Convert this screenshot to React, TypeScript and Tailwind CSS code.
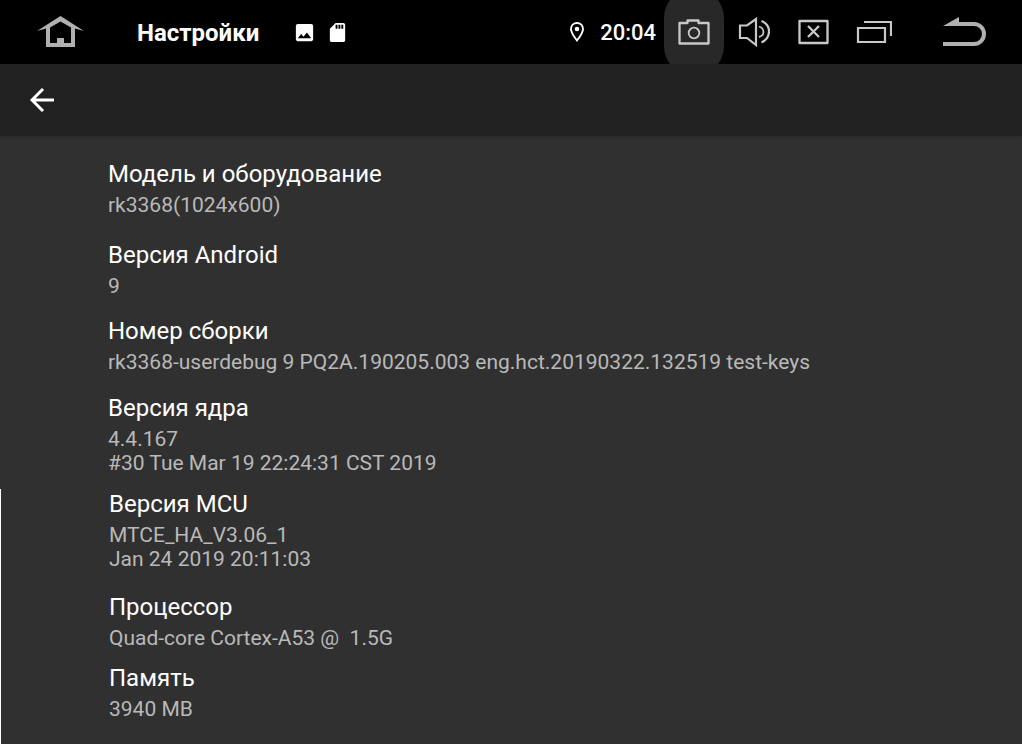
import { MdImage, MdSdCard } from "react-icons/md";
import { clsx } from "clsx";

type Info = { title: string; lines: string[]; gap: string };

const SYSTEM_INFO: Info[] = [
  { title: "Модель и оборудование", lines: ["rk3368(1024x600)"], gap: "pb-[23px]" },
  { title: "Версия Android", lines: ["9"], gap: "pb-[18px]" },
  {
    title: "Номер сборки",
    lines: ["rk3368-userdebug 9 PQ2A.190205.003 eng.hct.20190322.132519 test-keys"],
    gap: "pb-[19px]",
  },
  {
    title: "Версия ядра",
    lines: ["4.4.167", "#30 Tue Mar 19 22:24:31 CST 2019"],
    gap: "pb-[14px]",
  },
];

const HARDWARE_INFO: Info[] = [
  { title: "Версия MCU", lines: ["MTCE_HA_V3.06_1", "Jan 24 2019 20:11:03"], gap: "pb-[21px]" },
  { title: "Процессор", lines: ["Quad-core Cortex-A53 @  1.5G"], gap: "pb-[13px]" },
  { title: "Память", lines: ["3940 MB"], gap: "pb-[21px]" },
];

function HomeIcon() {
  return (
    <svg width="48" height="32" viewBox="0 0 48 32" fill="#b0b0b0">
      <path
        fillRule="evenodd"
        d="M24.500 0 48 15 39 12.500V31H10V12.500L1 15ZM24.500 5.500 14 11.500V27H21V22H28V27H35V11.500Z"
      />
    </svg>
  );
}

function CameraIcon() {
  return (
    <svg width="32" height="26" viewBox="0 0 32 26" fill="none" stroke="#c8c8c8" strokeWidth="2.300">
      <path d="M1.500 4H9.500V1.500H20.500V4H30.500V24.500H1.500Z" strokeLinejoin="round" />
      <circle cx="16" cy="14" r="5.300" strokeWidth="1.800" />
    </svg>
  );
}

function VolumeIcon() {
  return (
    <svg width="32" height="30" viewBox="0 0 32 30" fill="none" stroke="#c8c8c8" strokeWidth="2.200">
      <path d="M2 8.500H9L18 2V28L9 21H2Z" />
      <path d="M21 9.500Q25.500 11 25.500 15T21 20" strokeWidth="1.800" />
      <path d="M23.500 4C28.500 6 31 10 31 14.500S28.500 23 23.500 25.500" />
    </svg>
  );
}

function CloseBoxIcon() {
  return (
    <svg width="32" height="26" viewBox="0 0 32 26" fill="none" stroke="#c8c8c8" strokeWidth="2.300">
      <path d="M1.500 2H29.500V24H1.500Z" strokeLinejoin="round" />
      <path d="M10 7 21 18M21 7 10 18" />
    </svg>
  );
}

function RecentsIcon() {
  return (
    <svg width="36" height="24" viewBox="0 0 36 24" fill="none" stroke="#c8c8c8" strokeWidth="2.200">
      <path d="M2 8H29V22H2Z" />
      <path d="M8 2H35V16" />
    </svg>
  );
}

function ReturnIcon() {
  return (
    <svg width="44" height="30" viewBox="0 0 44 30">
      <path d="M1 9 17 0V5H32A12 12 0 0 1 32 29H1V25H32A8 8 0 0 0 32 9Z" fill="#b0b0b0" />
    </svg>
  );
}

function PinIcon() {
  return (
    <svg width="14" height="20" viewBox="0 0 14 20">
      <path
        d="M7 1C3.600 1 1 3.500 1 7 1 11 7 18.500 7 18.500S13 11 13 7C13 3.500 10.400 1 7 1Z"
        fill="none"
        stroke="#fff"
        strokeWidth="1.900"
      />
      <circle cx="7" cy="7" r="2.300" fill="#fff" />
    </svg>
  );
}

function StatusBar() {
  const button = "flex h-16 w-15 items-center justify-center";

  return (
    <header className="flex h-16 items-center overflow-hidden bg-black text-white">
      <button type="button" aria-label="Домой" className="ml-9 shrink-0">
        <HomeIcon />
      </button>
      <h1 className="ml-[53px] pt-px text-2xl font-bold">Настройки</h1>
      <div className="ml-[34px] flex items-center gap-[10px]">
        <MdImage className="size-[23px]" />
        <MdSdCard className="size-[23px]" />
      </div>

      <div className="ml-auto flex shrink-0 items-center">
        <PinIcon />
        <time className="mr-2 ml-4 pt-px text-[22px] font-medium">20:04</time>
        <button
          type="button"
          aria-label="Снимок экрана"
          className="flex h-22 w-15 items-center justify-center rounded-full bg-[#282828]"
        >
          <CameraIcon />
        </button>
        <button type="button" aria-label="Громкость" className={button}>
          <VolumeIcon />
        </button>
        <button type="button" aria-label="Закрыть" className={button}>
          <CloseBoxIcon />
        </button>
        <button type="button" aria-label="Недавние" className={button}>
          <RecentsIcon />
        </button>
        <button type="button" aria-label="Возврат" className="flex h-16 items-center pr-9 pl-[38px]">
          <ReturnIcon />
        </button>
      </div>
    </header>
  );
}

function InfoList({ items }: { items: Info[] }) {
  return (
    <dl>
      {items.map((item) => (
        <div key={item.title} className={clsx("flex flex-col gap-1", item.gap)}>
          <dt className="text-2xl leading-[30px] text-white">{item.title}</dt>
          <dd className="text-[21px] leading-6 whitespace-pre-wrap text-[#b9b9b9]">
            {item.lines.map((line) => (
              <p key={line}>{line}</p>
            ))}
          </dd>
        </div>
      ))}
    </dl>
  );
}

export default function App() {
  return (
    <div className="flex min-h-screen flex-col bg-[#303030] font-[Roboto,sans-serif]">
      <StatusBar />
      <nav className="flex h-18 items-center bg-[#212121] px-[30px] shadow-sm">
        <button type="button" aria-label="Назад" className="text-white">
          <svg width="24" height="24" viewBox="0 0 24 24" fill="none" stroke="currentColor" strokeWidth="3">
            <path d="M24 12H2M13 1 2 12 13 23" />
          </svg>
        </button>
      </nav>
      <main className="flex flex-1 flex-col">
        <section className="pt-[23px] pr-6 pl-[108px]">
          <InfoList items={SYSTEM_INFO} />
        </section>
        <section className="flex-1 border-l border-white pr-6 pl-[108px]">
          <InfoList items={HARDWARE_INFO} />
        </section>
      </main>
    </div>
  );
}
